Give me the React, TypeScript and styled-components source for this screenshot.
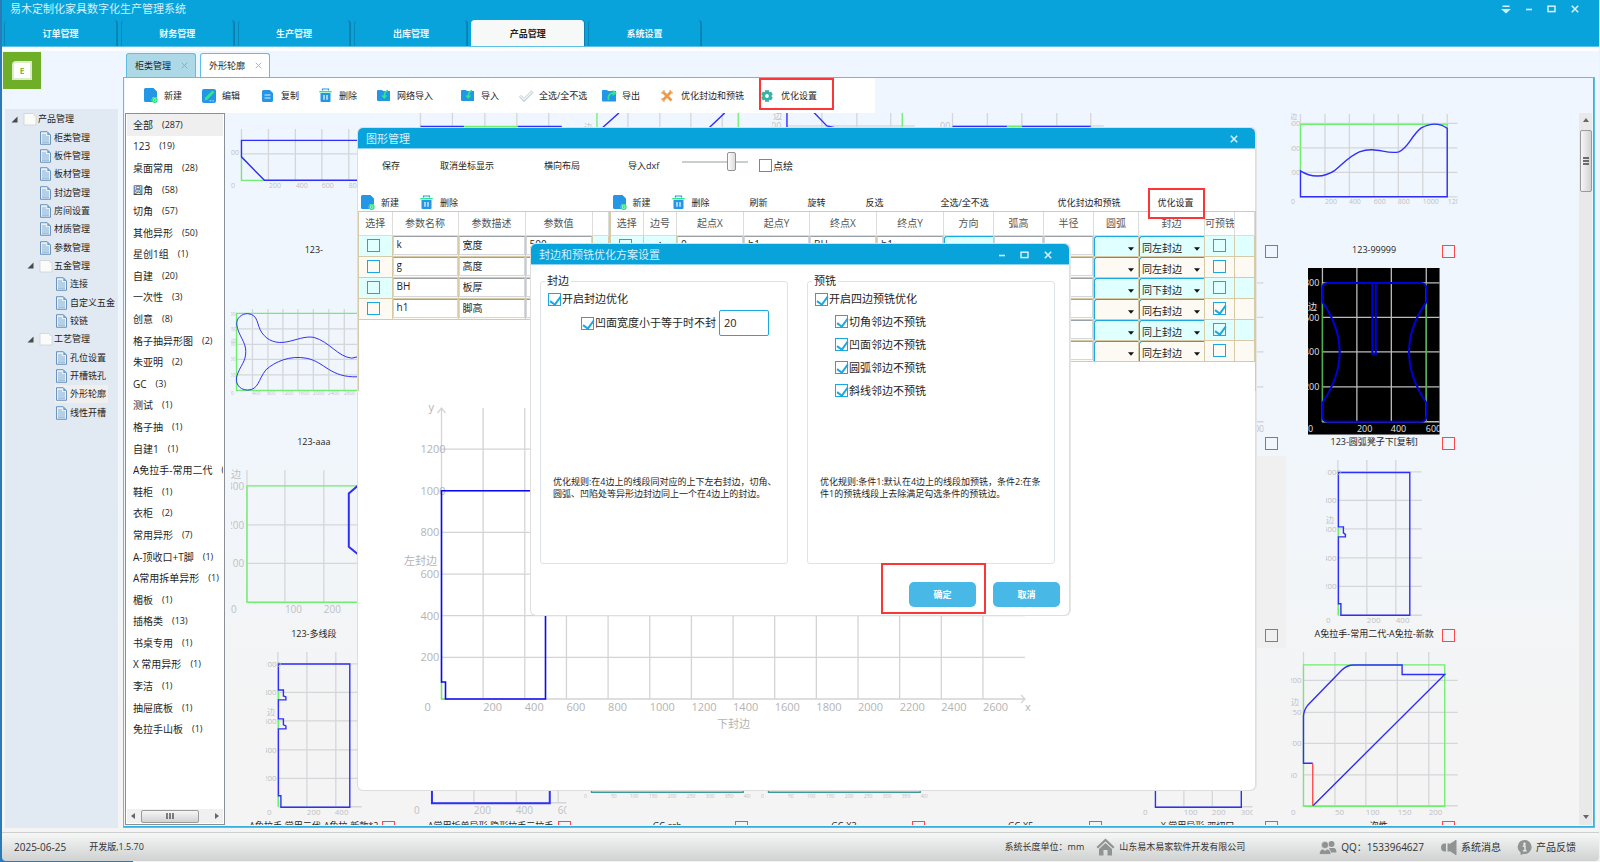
import React from "react";
import styled, { createGlobalStyle, css } from "styled-components";

const C = {
  blue: "#09a3dc",
  line: "#5cbfe6",
  accent: "#1ba8e0",
  text: "#1e1e1e",
  mark: "#fb3636",
  tan: "#d6cba6",
};

const GlobalStyle = createGlobalStyle`
  * { box-sizing: border-box; }
  html, body { margin: 0; padding: 0; }
  body {
    font-family: "Open Sans", "Noto Sans CJK SC", sans-serif;
    font-size: 9px;
    line-height: 12px;
    color: ${C.text};
  }
  button, input, select { font: inherit; color: inherit; }
  button { border: 0; background: none; padding: 0; cursor: pointer; white-space: nowrap; }
`;

/* ---------- shell ---------- */

const Shell = styled.div`
  position: relative;
  display: flex;
  flex-direction: column;
  height: 100vh;
  padding: 0 1px 1px 2px;
  overflow: hidden;
  background: linear-gradient(to right, #2a7ab5 133px, #f2f2f2 133px);
`;

const Header = styled.header`
  flex: 0 0 47px;
  background: ${C.blue};
  border-bottom: 1px solid ${C.line};
`;

const TitleRow = styled.div`
  display: flex;
  align-items: center;
  justify-content: space-between;
  height: 20px;
  padding: 0 19px 2px 8px;
`;

const AppTitle = styled.h1`
  margin: 0;
  font-size: 11px;
  font-weight: 400;
  line-height: 16px;
  color: #d2f1fd;
`;

const WindowButtons = styled.div`
  display: flex;
  align-items: center;
  gap: 12px;
`;

const WindowButton = styled.button`
  display: grid;
  place-items: center;
  width: 11px;
  height: 12px;
`;

const ModuleTabs = styled.nav`
  display: flex;
  gap: 4px;
  width: 699px;
  padding-left: 2px;
  height: 26px;
`;

const ModuleTab = styled.button<{ $active?: boolean }>`
  flex: 1;
  font-weight: 700;
  border-radius: 4px 4px 0 0;
  color: ${(p) => (p.$active ? "#222" : "#e8f8ff")};
  background: ${(p) => (p.$active ? "#f7f9f9" : C.blue)};
  border: 1px solid ${(p) => (p.$active ? "#f7f9f9" : "#0b86b8")};
  border-top-color: ${(p) => (p.$active ? "#f7f9f9" : C.blue)};
  border-bottom: 0;
  box-shadow: 1px 0 0 #0b7fae;
`;

const Workspace = styled.div`
  flex: 1;
  min-height: 0;
  display: flex;
  padding: 1px 4px 4px 1px;
  border-top: 4px solid #fcfdff;
  background: linear-gradient(#eff6ff 10%, #f1f6fb 55%, #f4f4f4 85%);
`;

const Side = styled.aside`
  flex: 0 0 120px;
  display: flex;
  flex-direction: column;
`;

const ModuleBadge = styled.button`
  display: grid;
  place-items: center;
  width: 38px;
  height: 37px;
  background: #6fae27;
`;

const BadgeSheet = styled.span`
  display: grid;
  place-items: center;
  width: 20px;
  height: 19px;
  border-radius: 4px 0 0 0;
  background: #fff;
  border: 2px solid #dcebc9;
  color: #7bb53b;
  font-size: 8px;
  font-weight: 700;
`;

const TreePane = styled.div`
  flex: 1;
  margin: 20px 5px 0 2px;
  background: #e1e9f3;
`;

const Tree = styled.ul`
  display: grid;
  grid-auto-rows: 1fr;
  height: 313px;
  margin: 0;
  padding: 1px 0 0;
  list-style: none;
`;

const TreeRow = styled.li<{ $level: number }>`
  display: flex;
  align-items: center;
  padding-left: ${(p) => 6 + p.$level * 16}px;
  white-space: nowrap;
`;

const TreeToggle = styled.span`
  display: flex;
  flex: 0 0 12px;
`;

const TreeLabel = styled.a<{ $selected?: boolean }>`
  display: flex;
  align-items: center;
  gap: 1px;
  height: 18px;
  padding-right: 2px;
  color: inherit;
  text-decoration: none;
  background: ${(p) => (p.$selected ? "#f0efee" : "transparent")};
`;

const Main = styled.main`
  flex: 1;
  min-width: 0;
  display: flex;
  flex-direction: column;
`;

const PageTabs = styled.div`
  display: flex;
  gap: 4px;
  height: 25px;
  padding: 1px 0 0 3px;
`;

const PageTab = styled.button<{ $active?: boolean }>`
  position: relative;
  display: flex;
  align-items: center;
  justify-content: space-between;
  width: 70px;
  padding: 0 7px 0 8px;
  border: 1px solid ${C.line};
  border-bottom: 0;
  border-radius: 3px 3px 0 0;
  background: ${(p) => (p.$active ? "#fff" : "#add8e6")};
`;

const Panel = styled.section`
  flex: 1;
  min-height: 0;
  display: flex;
  flex-direction: column;
  border: 1px solid ${C.line};
  box-shadow: inset 0 -1px 0 #35afdf, inset -1px 0 0 #35afdf;
  padding: 0 2px 2px 1px;
`;

const Toolbar = styled.div`
  display: flex;
  align-items: center;
  width: 750px;
  height: 35px;
  padding-left: 19px;
  background: #fff;
`;

const ToolButtonBox = styled.button<{ $w: number }>`
  position: relative;
  display: flex;
  align-items: center;
  flex: 0 0 ${(p) => p.$w}px;
  height: 20px;
`;

const IconSlot = styled.span`
  display: flex;
  align-items: center;
  flex: 0 0 20px;
`;

/* red frame that points out a control */
const Mark = styled.span<{ $x: number; $y: number; $w: number; $h: number }>`
  position: absolute;
  left: ${(p) => p.$x}px;
  top: ${(p) => p.$y}px;
  width: ${(p) => p.$w}px;
  height: ${(p) => p.$h}px;
  border: 2px solid ${C.mark};
  pointer-events: none;
`;

const Split = styled.div`
  flex: 1;
  min-height: 0;
  display: flex;
`;

const CategoryPane = styled.div`
  flex: 0 0 100px;
  display: flex;
  flex-direction: column;
  justify-content: space-between;
  margin-right: 1px;
  overflow: hidden;
  border: 1px solid #8b8f96;
  background: #fff;
`;

const CategoryList = styled.ul`
  display: grid;
  grid-auto-rows: 1fr;
  height: 626px;
  margin: 0;
  padding: 0 1px;
  list-style: none;
`;

const Category = styled.li<{ $selected?: boolean }>`
  display: flex;
  align-items: center;
  gap: 9px;
  padding-left: 6px;
  font-size: 10px;
  overflow: hidden;
  white-space: nowrap;
  background: ${(p) => (p.$selected ? "#efefef" : "transparent")};
`;

const CategoryName = styled.span`
  flex: none;
`;

const CategoryCount = styled.span`
  font-size: 9px;
`;

const HScroll = styled.div`
  display: flex;
  align-items: center;
  justify-content: space-between;
  height: 14px;
  margin: 0 1px 1px;
  padding: 0 4px;
  background: #f0f0f0;
`;

const HThumb = styled.div`
  display: grid;
  place-items: center;
  width: 58px;
  height: 13px;
  margin-right: 10px;
  border: 1px solid #9a9a9a;
  border-radius: 2px;
  background: linear-gradient(#f6f6f6, #d2d2d2);
`;

const Gallery = styled.div`
  flex: 1;
  min-width: 0;
  overflow: hidden;
  padding-right: 116px;
`;

/* the sheet is scrolled down by part of a row */
const GalleryGrid = styled.div`
  display: grid;
  grid-template-columns: repeat(auto-fill, minmax(172px, 1fr));
  grid-auto-rows: 192px;
  margin-top: -41px;
`;

const Card = styled.figure<{ $hover?: boolean }>`
  display: flex;
  flex-direction: column;
  margin: 0;
  background: ${(p) => (p.$hover ? "#f0f0f0" : "transparent")};
`;

const Drawing = styled.svg`
  display: block;
  width: 100%;
  height: 171px;
`;

const Caption = styled.figcaption`
  display: flex;
  align-items: center;
  height: 16px;
  padding: 0 8px 0 20px;
`;

const CaptionText = styled.label`
  flex: 1;
  min-width: 0;
  padding-bottom: 2px;
  text-align: center;
  white-space: nowrap;
`;

const VScroll = styled.div`
  flex: 0 0 13px;
  display: flex;
  flex-direction: column;
  align-items: center;
  padding: 5px 0 6px;
  background: #e9e9ea;
`;

const VThumb = styled.div`
  display: grid;
  place-items: center;
  width: 12px;
  height: 62px;
  margin: 8px 0 auto;
  border: 1px solid #9a9a9a;
  border-radius: 2px;
  background: linear-gradient(to right, #f6f6f6, #d2d2d2);
`;

const Footer = styled.footer`
  flex: 0 0 29px;
  display: flex;
  align-items: center;
  padding: 0 23px 0 12px;
  border-top: 1px solid #cdcfcf;
  border-radius: 0 0 4px 4px;
  color: #333;
  background: linear-gradient(#f6f7f7, #cfd2d1);
`;

const FooterItem = styled.span<{ $push?: boolean; $gap: number; $big?: boolean }>`
  display: flex;
  align-items: center;
  gap: 4px;
  margin-left: ${(p) => (p.$push ? "auto" : p.$gap + "px")};
  font-size: ${(p) => (p.$big ? 10 : 9)}px;
  white-space: nowrap;
`;

/* ---------- form parts ---------- */

const Check = styled.input.attrs({ type: "checkbox" })<{ $red?: boolean }>`
  appearance: none;
  position: relative;
  flex: none;
  width: 13px;
  height: 13px;
  margin: 0;
  border: 1px solid ${(p) => (p.$red ? "#ff4747" : C.accent)};
  background: ${(p) => (p.$red ? "transparent" : "#fff")};
  &:checked::after {
    content: "";
    position: absolute;
    left: 3px;
    top: 0;
    width: 5px;
    height: 9px;
    border: solid ${C.accent};
    border-width: 0 2px 2px 0;
    transform: rotate(36deg);
  }
`;

const CheckLabel = styled.label<{ $size?: number }>`
  display: flex;
  align-items: center;
  gap: 1px;
  font-size: ${(p) => p.$size || 11}px;
  white-space: nowrap;
`;

/* ---------- windows ---------- */

const windowFrame = css`
  position: absolute;
  display: flex;
  flex-direction: column;
  border-radius: 5px;
  background: #fff;
  box-shadow: 0 0 0 1px #dedede, 1px 0 0 1px #e6e6e6;
`;

const ShapeWindow = styled.section`
  ${windowFrame}
  left: 358px;
  top: 128px;
  width: 897px;
  height: 662px;
`;

const OptionsWindow = styled.section`
  ${windowFrame}
  left: 531px;
  top: 244px;
  width: 538px;
  height: 371px;
`;

const WindowTitle = styled.header`
  display: flex;
  align-items: center;
  justify-content: space-between;
  flex: 0 0 21px;
  padding: 1px 16px 0 8px;
  border-radius: 5px 5px 0 0;
  border-bottom: 1px solid #8fd3ee;
  background: ${C.blue};
  color: #d2f1fd;
  font-size: 11px;
`;

const WindowBar = styled.div`
  display: flex;
  align-items: center;
  height: 33px;
  padding-left: 4px;
`;

const ZoomSlider = styled.input.attrs({ type: "range" })`
  appearance: none;
  width: 66px;
  height: 20px;
  margin: 0 11px 8px -10px;
  background: transparent;
  &::-webkit-slider-runnable-track {
    height: 2px;
    background: #c9cfcf;
  }
  &::-webkit-slider-thumb {
    appearance: none;
    width: 9px;
    height: 19px;
    margin-top: -9px;
    border: 1px solid #929292;
    border-radius: 2px;
    background: linear-gradient(to right, #fdfdfd, #dcdcdc);
  }
`;

const Panes = styled.div`
  display: flex;
  margin-top: 8px;
`;

const PaneColumn = styled.div<{ $w: number }>`
  flex: 0 0 ${(p) => p.$w}px;
`;

const PaneBar = styled.div`
  display: flex;
  align-items: center;
  height: 21px;
  padding: 4px 0 0 3px;
`;

const PaneBox = styled.div`
  height: 180px;
  border: 1px solid ${C.tan};
  border-bottom: 0;
`;

const Grid = styled.table`
  table-layout: fixed;
  border-collapse: collapse;
  width: 100%;
  font-size: 10px;
`;

const HeadCell = styled.th`
  height: 23px;
  padding: 0;
  border: 1px solid #dcdcdc;
  border-top: 0;
  border-left: 0;
  font-weight: 400;
  color: #555;
  overflow: hidden;
  white-space: nowrap;
`;

const GridRow = styled.tr<{ $odd?: boolean }>`
  background: ${(p) => (p.$odd ? "#fcfaf3" : "#e0ffff")};
`;

const Cell = styled.td<{ $center?: boolean }>`
  height: 21px;
  padding: 0;
  border: 1px solid ${C.tan};
  border-left: 0;
  text-align: ${(p) => (p.$center ? "center" : "left")};
  line-height: 12px;
  vertical-align: middle;
  & > input[type="checkbox"] { display: block; margin: 0 auto 0 8px; background: transparent; }
`;

const CellInput = styled.input`
  display: block;
  width: 100%;
  height: 19px;
  padding: 0 3px 3px;
  border: 1px solid #d4d8dc;
  border-top-color: #9aa0a6;
  background: #fff;
  outline: 0;
`;

const CellSelect = styled.div`
  position: relative;
  height: 20px;
  border-left: 1px solid ${C.accent};
  border-top: 1px solid ${C.accent};
  border-radius: 3px 0 0 0;
  & > svg { position: absolute; right: 4px; top: 10px; }
  & > select {
    appearance: none;
    display: block;
    width: 100%;
    height: 19px;
    padding: 4px 0 0 2px;
    border: 0;
    background: transparent;
    line-height: 12px;
  }
`;

const ChartArea = styled.svg`
  display: block;
  flex: none;
  width: 100%;
  height: 350px;
  margin-top: 6px;
`;

const OptionsBody = styled.div`
  display: flex;
  gap: 19px;
  padding: 9px 14px 0 9px;
`;

const Group = styled.fieldset`
  flex: 1;
  min-width: 0;
  height: 290px;
  margin: 0;
  padding: 0;
  border: 1px solid #dbe4ea;
  border-radius: 3px;
`;

const GroupTitle = styled.legend`
  margin-left: 4px;
  padding: 0 2px;
  font-size: 11px;
  line-height: 14px;
`;

const GroupBody = styled.div`
  display: flex;
  flex-direction: column;
  height: 275px;
  padding: 0 0 63px 7px;
`;

const OptionRow = styled.div<{ $indent?: number; $h?: number }>`
  display: flex;
  align-items: center;
  gap: 3px;
  height: ${(p) => p.$h || 22}px;
  padding-left: ${(p) => p.$indent || 0}px;
`;

const WidthInput = styled.input`
  width: 50px;
  height: 26px;
  padding: 0 4px 2px;
  border: 1px solid ${C.accent};
  border-radius: 2px;
  font-size: 11px;
`;

const Rule = styled.p`
  margin: auto 0 0 5px;
  white-space: nowrap;
`;

const Actions = styled.div`
  display: flex;
  justify-content: flex-end;
  gap: 17px;
  margin-top: 18px;
  padding-right: 9px;
`;

const ActionButton = styled.button`
  position: relative;
  width: 67px;
  height: 25px;
  border-radius: 5px;
  background: #48b9e6;
  color: #fff;
  font-weight: 700;
`;

/* ---------- icons ---------- */

const MinIcon = () => (
  <svg width="8" height="8" viewBox="0 0 8 8"><path d="M1 4.5h6" stroke="#d2f1fd" strokeWidth="1.6" /></svg>
);
const MaxIcon = () => (
  <svg width="9" height="8" viewBox="0 0 9 8"><rect x="1" y="1.2" width="7" height="5.4" fill="none" stroke="#d2f1fd" strokeWidth="1.5" /></svg>
);
const CloseIcon = ({ color = "#d2f1fd", size = 8 }: { color?: string; size?: number }) => (
  <svg width={size} height={size} viewBox="0 0 8 8"><path d="M.8.8l6.4 6.4M7.2.8L.8 7.2" stroke={color} strokeWidth={color === "#d2f1fd" ? 1.6 : 1} /></svg>
);
const MenuIcon = () => (
  <svg width="10" height="10" viewBox="0 0 10 10" fill="#d2f1fd"><path d="M1.500 1.500h7v1.400h-7zM0 5h10L5 9.600z" /></svg>
);

const icons: Record<string, React.ReactNode> = {
  add: (
    <svg width="14" height="15" viewBox="0 0 14 15">
      <path d="M1.500 0h8L13 3.500V14H1.500A1.500 1.500 0 0 1 0 12.500V1.500A1.500 1.500 0 0 1 1.500 0z" fill="#2496e6" />
      <circle cx="10.700" cy="12" r="3" fill="#e9fff2" /><circle cx="10.700" cy="12" r="2.300" fill="none" stroke="#21e07c" strokeWidth="1.200" />
      <path d="M10.700 10.700v2.600M9.400 12h2.600" stroke="#21e07c" />
    </svg>
  ),
  edit: (
    <svg width="14" height="14" viewBox="0 0 14 14">
      <rect width="14" height="14" rx="2" fill="#2496e6" />
      <path d="M2.500 11.500l.8-3L10.500 1.500l2 1.700-7.200 7.500z" fill="#2be98b" /><path d="M7.500 11.800h2M10.500 11.800h1.500" stroke="#cfe8fb" strokeWidth=".8" />
    </svg>
  ),
  copy: (
    <svg width="13" height="14" viewBox="0 0 13 14">
      <path d="M2.500 1h6.300L12 4v7.500A1.500 1.500 0 0 1 10.500 13h-8A1.500 1.500 0 0 1 1 11.500v-9A1.500 1.500 0 0 1 2.500 1z" fill="#2496e6" />
      <path d="M3.500 6h6M3.500 9h6" stroke="#d9eefc" strokeWidth="1.200" />
    </svg>
  ),
  trash: (
    <svg width="13" height="15" viewBox="0 0 13 15">
      <path d="M3.500 2.500V1h6v1.500" fill="none" stroke="#2496e6" strokeWidth="1.200" /><path d="M.3 3.700h12.400" stroke="#2be98b" strokeWidth="1.400" />
      <path d="M1.500 5h10v8a1 1 0 0 1-1 1h-8a1 1 0 0 1-1-1z" fill="#2496e6" /><path d="M5 7v4.800M8 7v4.800" stroke="#e4f3fd" strokeWidth="1.300" />
    </svg>
  ),
  load: (
    <svg width="14" height="13" viewBox="0 0 14 13">
      <path d="M1 1h4l1 1h7v10H1a1 1 0 0 1-1-1V2a1 1 0 0 1 1-1z" fill="#2496e6" />
      <path d="M11 1.500C8.500 2 7.500 4 7.300 7.200" fill="none" stroke="#2be98b" strokeWidth="1.700" /><path d="M4.300 6.500h6L7.300 10z" fill="#2be98b" />
    </svg>
  ),
  check: (
    <svg width="15" height="12" viewBox="0 0 15 12">
      <path d="M1 6l4 3.800L13.500 1.500" fill="none" stroke="#bccbd2" strokeWidth="3" /><path d="M1.300 6.200L5 9.500l8.200-7.800" fill="none" stroke="#eef6f8" strokeWidth="1.500" />
    </svg>
  ),
  export: (
    <svg width="16" height="13" viewBox="0 0 16 13">
      <path d="M1 1h4l1 1h8v10.500H1a1 1 0 0 1-1-1V2a1 1 0 0 1 1-1z" fill="#2496e6" />
      <path d="M6.500 11C5.500 7 7.500 4.500 11 4" fill="none" stroke="#2be98b" strokeWidth="1.700" /><path d="M10.500 .8L15 4 10.500 7z" fill="#2be98b" />
    </svg>
  ),
  tools: (
    <svg width="12" height="12" viewBox="0 0 12 12">
      <path d="M2 2l8.500 8.500M10 2L2 10" stroke="#eb9a4c" strokeWidth="2.800" /><path d="M.5 3.500L3.500 .5M8.500 .5l3 3M.5 8.500l3 3" stroke="#f2a763" strokeWidth="1.600" />
    </svg>
  ),
  gear: (
    <svg width="12" height="12" viewBox="0 0 12 12">
      <circle cx="6" cy="6" r="3.300" fill="none" stroke="#36b4a2" strokeWidth="2.800" />
      <path d="M4 .3h4v2H4zM4 9.700h4v2H4zM.2 4.500l1.700-3 1.700 1-1.700 3zM8.400 9.500l1.700-3 1.700 1-1.700 3zM11.800 4.500l-1.700-3-1.700 1 1.700 3zM3.600 9.500l-1.700-3-1.700 1 1.700 3z" fill="#36b4a2" />
    </svg>
  ),
};

const FolderIcon = () => (
  <svg width="14" height="14" viewBox="0 0 14 14"><path d="M1 1.500h9.500L13 4v9H1z" fill="#fbfbfa" stroke="#cfd2d5" strokeWidth=".8" /><path d="M10.500 1.500V4H13" fill="#e2e2e2" /></svg>
);
const DocIcon = () => (
  <svg width="14" height="14" viewBox="0 0 14 14">
    <path d="M1.500.7h6.800L11.500 4v9.300h-10z" fill="#e4f0fa" stroke="#5d8ab5" strokeWidth=".9" /><path d="M8.300.7V4h3.200z" fill="#6d9cc8" />
    <path d="M3 4h4M3 6h7M3 8h7M3 10h7M3 11.800h7" stroke="#7ea7cf" strokeWidth=".9" />
  </svg>
);
const ToggleIcon = () => <svg width="7" height="7" viewBox="0 0 7 7"><path d="M6.500.5v6h-6z" fill="#4a4a4a" /></svg>;

function ToolButton({ icon, label, w, children }: { icon?: string; label: string; w: number; children?: React.ReactNode }) {
  return (
    <ToolButtonBox $w={w}>
      <IconSlot>{icon ? icons[icon] : null}</IconSlot>
      {label}
      {children}
    </ToolButtonBox>
  );
}

/* ---------- data ---------- */

const moduleTabs = ["订单管理", "财务管理", "生产管理", "出库管理", "产品管理", "系统设置"];

const tree: [number, string, boolean?][] = [
  [0, "产品管理", true], [1, "柜类管理"], [1, "板件管理"], [1, "板材管理"], [1, "封边管理"], [1, "房间设置"],
  [1, "材质管理"], [1, "参数管理"], [1, "五金管理", true], [2, "连接"], [2, "自定义五金"], [2, "铰链"],
  [1, "工艺管理", true], [2, "孔位设置"], [2, "开槽铣孔"], [2, "外形轮廓"], [2, "线性开槽"],
];

const categories: [string, number][] = [
  ["全部", 287], ["123", 19], ["桌面常用", 28], ["圆角", 58], ["切角", 57], ["其他异形", 50], ["星创1组", 1],
  ["自建", 20], ["一次性", 3], ["创意", 8], ["格子抽异形图", 2], ["朱亚明", 2], ["GC", 3], ["测试", 1],
  ["格子抽", 1], ["自建1", 1], ["A免拉手-常用二代", 1], ["鞋柜", 1], ["衣柜", 2], ["常用异形", 7],
  ["A-顶收口+T脚", 1], ["A常用拆单异形", 1], ["楣板", 1], ["插格类", 13], ["书桌专用", 1], ["X 常用异形", 1],
  ["李洁", 1], ["抽屉底板", 1], ["免拉手山板", 1],
];

type Label = [number, number, string];
interface Shape {
  name?: string;
  box?: [number, number, number, number]; // visible part: left, top, right, bottom
  xs?: number[];
  ys?: number[];
  span?: [number, number, number, number]; // grid lines: left, top, right, bottom
  green?: string;
  blue?: string;
  red?: string;
  teal?: string;
  width?: number;
  size?: number;
  labels?: Label[];
  dark?: boolean;
}

const ticks = (dx: number): Label[] =>
  [0, 50, 100, 150, 200, 250, 300, 350, 400].map((v, i) => [i ? 611 + dx + (i - 1) * 19 : 584 + dx, 798, String(v)]);

/* outlines are given in the coordinates of the whole sheet, whose first card starts at 226, 72 */
const shapes: Record<string, Shape> = {
  "0-0": {
    name: "123-", box: [231, 113, 403, 240], xs: [241.5, 268.5, 295.5, 322, 349], ys: [154], span: [241, 129, 403, 180],
    green: "M241.5 157V180.500H264", blue: "M403 140.500H241.500V157L264.500 180.500H403", size: 7,
    labels: [[227, 155, "500"], [231, 188, "0"], [269, 188, "200"], [296, 188, "400"], [322, 188, "600"], [349, 188, "800"]],
  },
  "0-1": { xs: [420.5, 452.5, 485, 517, 549], span: [420, 100, 579, 127], green: "M464 126.500H518", blue: "M420.500 126.500H464M518 126.500H562" },
  "0-2": { box: [584, 100, 756, 200], xs: [628, 660, 691, 722.5], span: [597, 100, 756, 129], green: "M597 100V129M738.500 100V129", blue: "M601 129L619 113M708 129L725 113", labels: [[584, 130, "边"]], size: 8 },
  "0-3": { box: [772, 100, 933, 200], xs: [822, 857, 891], ys: [126], span: [787, 100, 915, 129], green: "M902.500 100V129", blue: "M787 100V129M813.500 112L827 126L836 128", labels: [[773, 119, "边"], [766, 129, "600"]], size: 9 },
  "0-4": { box: [939, 100, 1109, 200], xs: [951.5, 986.5, 1021, 1056, 1090], ys: [126], span: [951, 100, 1103, 127], green: "M1006 126.500H1021", blue: "M951.500 126.500H1006M1021 126.500H1090", labels: [[934, 129, "400"]], size: 9 },
  "0-6": {
    name: "123-99999", box: [1291, 113, 1458, 240], xs: [1300.5, 1325, 1349.5, 1374, 1398.5, 1423, 1447.5], ys: [123.5, 148, 172.500, 197], span: [1300, 114, 1458, 197],
    green: "M1300.500 171V124.500H1447.500V128", size: 7,
    blue: "M1300.500 171C1311 178 1324 178 1335 170.500C1345 162 1350 156 1359.500 152C1376 146 1386 155 1399 152C1409 148 1411 136 1421.500 128C1431 123 1440 123 1447.500 128.500V197H1300.500Z",
    labels: [[1290, 119, "边"], [1288, 126, "600"], [1288, 151, "400"], [1288, 175, "200"], [1291, 204, "0"], [1325, 204, "200"], [1349, 204, "400"], [1374, 204, "600"], [1398, 204, "800"], [1423, 204, "1000"], [1448, 204, "1200"]],
  },
  "1-0": {
    name: "123-aaa", box: [231, 300, 403, 430], xs: [252.5, 268, 283, 298, 313.5, 329, 344.5, 360], ys: [329, 344.500, 359.500, 375], span: [237, 309, 403, 390], size: 5,
    green: "M403 313.500H236.500V390.500H403", width: 1,
    blue: "M403 377H358C330 378 325 362 307 358.500C290 355 275 362 266 370C258 380 259 390 247.500 390.300C238 390 235 382 237 376C240 366 246 362 245.800 351.700C246 342 238 335 236.800 325C236 318 242 313.700 247.800 313.700C259 315 256 324 262 333C268 341 276 344 287 342C297 340 305 336 314 337.500C330 342 338 357 352 358.300L362 356",
    labels: [[227, 316, "500"], [231, 331, "50"], [231, 342, "边"], [227, 346, "200"], [227, 361, "100"], [227, 377, "100"], [231, 395, "0"], [252, 395, "400"], [267, 395, "800"], [282, 395, "1200"], [298, 395, "1600"], [313, 395, "2000"], [328, 395, "2400"], [344, 395, "2800"]],
  },
  "1-5": { ys: [283, 317.5, 352, 387, 422], span: [1240, 283, 1263, 422], box: [1200, 270, 1263, 434], labels: [[1248, 432, "1000"]], size: 9 },
  "1-6": {
    name: "123-圆弧凳子下[复制]", dark: true, box: [1308, 268, 1440, 435], xs: [1322.5, 1357, 1391.500, 1426.500], ys: [283, 317.500, 352, 387, 422], span: [1322, 268, 1440, 422],
    green: "M1322.500 283V422M1426.500 283V422", width: 2, size: 9,
    blue: "M1328 283H1421Q1426.500 283 1426.500 289V302Q1392 352 1426.500 403V416Q1426.500 422 1421 422H1328Q1322.500 422 1322.500 416V403Q1357 352 1322.500 302V289Q1322.500 283 1328 283M1372.500 283V354H1376V283",
    labels: [[1304, 286, "800"], [1308, 310, "边"], [1304, 321, "600"], [1304, 355, "400"], [1304, 390, "200"], [1308, 432, "0"], [1357, 432, "200"], [1391, 432, "400"], [1426, 432, "600"]],
  },
  "2-0": {
    name: "123-多线段", box: [231, 465, 403, 620], xs: [247, 285, 324], ys: [525, 563.500], span: [247, 470, 403, 602],
    green: "M403 486H247V602.500H403", width: 2, blue: "M360 484L349 493.500V547L360 556", size: 10,
    labels: [[231, 478, "边"], [227, 490, "300"], [227, 529, "200"], [227, 567, "100"], [231, 613, "0"], [285, 613, "100"], [324, 613, "200"]],
  },
  "2-6": {
    name: "A免拉手-常用二代-A免拉-新款", box: [1326, 456, 1450, 640], xs: [1338, 1367, 1396], ys: [472, 500.500, 529, 558, 586.500, 615.500], span: [1338, 460, 1422, 616],
    green: "M1338.500 527V537M1338.500 604V615.500", size: 8,
    blue: "M1338.500 472.500H1410V615.500H1341V604H1338.500V537H1345.500V534.500L1343.500 533V527H1338.500Z",
    labels: [[1323, 475, "1000"], [1323, 503, "800"], [1326, 523, "边"], [1323, 532, "600"], [1323, 561, "400"], [1323, 589, "200"], [1326, 623, "0"], [1367, 623, "200"], [1396, 623, "400"]],
  },
  "3-0": {
    name: "A免拉手-常用二代-A免拉-新款*2", box: [266, 648, 403, 830], xs: [278, 307, 336], ys: [664, 692.500, 721, 750, 778.500, 807], span: [278, 652, 362, 807],
    green: "M278.500 690V700M278.500 719V729M278.500 796V807", size: 8,
    blue: "M278.500 664H350V807.500H281V796H278.500V729H286V726L283.500 725V719H278.500V700H286V697L283.500 696V690H278.500Z",
    labels: [[263, 667, "1000"], [263, 695, "800"], [267, 715, "边"], [263, 724, "600"], [263, 753, "400"], [263, 781, "200"], [267, 815, "0"], [307, 815, "200"], [335, 815, "400"]],
  },
  "3-1": { name: "A常用拆单异形-隐形拉手三拉手", box: [403, 700, 567, 830], xs: [474, 516.5, 558.5], ys: [803], span: [432, 700, 567, 803], blue: "M432 700V803.500H550V700", width: 2, size: 10, labels: [[414, 814, "0"], [474, 814, "200"], [516, 814, "400"], [558, 814, "600"]] },
  "3-2": { name: "GC-ssb", box: [579, 700, 751, 830], teal: "M591.500 700V792.500H743.500V700", size: 5, labels: ticks(0) },
  "3-3": { name: "GC-X3", box: [756, 700, 928, 830], teal: "M768.500 700V792.500H920.500V700", size: 5, labels: ticks(177) },
  "3-4": { name: "GC-X5" },
  "3-5": { name: "X 常用异形-双切口", box: [1109, 700, 1252, 830], xs: [1183, 1211.5], ys: [807], span: [1154, 700, 1252, 807], blue: "M1154.500 700V807.500H1240.500V700", size: 8, labels: [[1142, 815, "0"], [1183, 815, "100"], [1211, 815, "200"], [1240, 815, "300"]] },
  "3-6": {
    name: "一次性", box: [1291, 648, 1460, 830], xs: [1303.5, 1335, 1366, 1397.500, 1429], ys: [680.500, 712.500, 743.500, 775, 806], span: [1303, 652, 1458, 806],
    green: "M1303.500 665H1445V806.500H1303.500Z", red: "M1312.800 763.500V806", size: 8,
    blue: "M1312.800 763.500H1303.500V716Q1304 710 1308 705L1342 670Q1347 665 1354 665H1402.300V674.500H1445L1313 806",
    labels: [[1288, 683, "200"], [1291, 705, "边"], [1288, 715, "150"], [1288, 746, "100"], [1288, 778, "50"], [1291, 815, "0"], [1335, 815, "50"], [1366, 815, "100"], [1398, 815, "150"], [1429, 815, "200"]],
  },
};

function ShapeCard({ row, col }: { row: number; col: number }) {
  const id = `${row}-${col}`;
  const s: Shape = shapes[id] || {};
  const x = Math.round(226 + col * 176.6);
  const y = 72 + row * 192;
  const [bl, bt, br, bb] = s.box || [x, y, x + 177, y + 171];
  const [gl, gt, gr, gb] = s.span || [0, 0, 0, 0];
  const w = s.width || 1.4;
  return (
    <Card $hover={row === 2 && col === 5}>
      <Drawing viewBox={`${x} ${y} 177 171`} preserveAspectRatio="xMidYMin meet" fill="none" aria-hidden>
        <clipPath id={"clip-" + id}><rect x={bl} y={bt} width={br - bl} height={bb - bt} /></clipPath>
        <g clipPath={`url(#clip-${id})`}>
          {s.dark && <rect x={bl} y={bt} width={br - bl} height={bb - bt} fill="#000" />}
          <g stroke={s.dark ? "#bdbdbd" : "#d4d6d9"} strokeWidth="1.3">
            {(s.xs || []).map((v) => <path key={v} d={`M${v} ${gt}V${gb}`} />)}
            {(s.ys || []).map((v) => <path key={v} d={`M${gl} ${v}H${gr}`} />)}
          </g>
          {s.green && <path d={s.green} stroke={s.dark ? "#4fae4f" : "#6fee6f"} strokeWidth="1.3" />}
          {s.teal && <path d={s.teal} stroke="#3f9a96" strokeWidth="1.3" />}
          {s.blue && <path d={s.blue} stroke={s.dark ? "#0000d8" : "#2f2ffb"} strokeWidth={w} />}
          {s.red && <path d={s.red} stroke="#ff4040" strokeWidth="1.3" />}
          <g fill={s.dark ? "#e4e4e4" : "#bfc1c4"} fontSize={s.size || 8}>
            {(s.labels || []).map(([lx, ly, t], i) => <text key={i} x={lx} y={ly}>{t}</text>)}
          </g>
        </g>
      </Drawing>
      <Caption>
        <CaptionText htmlFor={"shape-" + id}>{s.name}</CaptionText>
        <Check $red id={"shape-" + id} />
      </Caption>
    </Card>
  );
}

/* ---------- shape window ---------- */

const params: [string, string, string][] = [["k", "宽度", "500"], ["g", "高度", "1000"], ["BH", "板厚", "18"], ["h1", "脚高", "80"]];

const paramCols: [string, number][] = [["选择", 33], ["参数名称", 66], ["参数描述", 67], ["参数值", 67], ["", 16]];
const edgeCols: [string, number][] = [
  ["选择", 33], ["边号", 33], ["起点X", 67], ["起点Y", 66], ["终点X", 67], ["终点Y", 67], ["方向", 50],
  ["弧高", 50], ["半径", 50], ["圆弧", 45], ["封边", 66], ["可预铣", 30], ["", 20],
];
const edges: [string, string, string, string, string, boolean][] = [
  ["0", "h1", "BH", "h1", "同左封边", false],
  ["BH", "h1", "BH", "0", "同左封边", false],
  ["BH", "0", "k", "0", "同下封边", false],
  ["k", "0", "k", "g", "同右封边", true],
  ["k", "g", "0", "g", "同上封边", true],
  ["0", "g", "0", "h1", "同左封边", false],
];
const edgeBands = ["同左封边", "同右封边", "同上封边", "同下封边"];

const Caret = () => <svg width="6" height="4" viewBox="0 0 6 4"><path d="M0 .3h6L3 3.700z" fill="#111" /></svg>;

function TableHead({ cols }: { cols: [string, number][] }) {
  return (
    <>
      <colgroup>{cols.map(([, w], i) => <col key={i} width={w} />)}</colgroup>
      <thead><tr>{cols.map(([t], i) => <HeadCell key={i}>{t}</HeadCell>)}</tr></thead>
    </>
  );
}

function ShapeChart() {
  const ox = 83.5;
  const oy = 302;
  const u = 41.65;
  const right = 667;
  const xs = Array.from({ length: 13 }, (_, i) => i + 1);
  const ys = [1, 2, 3, 4, 5, 6];
  return (
    <ChartArea fill="none" aria-label="图形预览">
      <g stroke="#d4d4d4" strokeWidth="1.3">
        <path d={`M${ox} ${oy}V11M${ox - 4} 16L${ox} 11L${ox + 4} 16`} />
        <path d={`M${ox} ${oy}H${right}M${right - 4} ${oy - 4}L${right} ${oy}L${right - 4} ${oy + 4}`} />
        {xs.map((i) => <path key={i} d={`M${ox + i * u} 11V${oy}`} />)}
        {ys.map((i) => <path key={i} d={`M${ox} ${oy - i * u}H${right}`} />)}
      </g>
      <g fill="#b4b4b4" fontSize="11">
        {xs.map((i) => <text key={i} x={ox + i * u} y={oy + 12}>{i * 200}</text>)}
        {ys.map((i) => <text key={i} x={ox - 21} y={oy - i * u + 4}>{i * 200}</text>)}
        <text x={ox - 17} y={oy + 12}>0</text>
        <text x={ox - 13} y="14">y</text>
        <text x={right} y={oy + 12}>x</text>
        <text x="46" y="168">左封边</text>
        <text x="359" y={oy + 29}>下封边</text>
      </g>
      <path d={`M${ox} ${oy - 17}V${oy}H${ox + 4}`} stroke="#6fe86f" strokeWidth="1.500" />
      <path d={`M${ox} ${oy - 17}V${oy - 5 * u}H${ox + 104}V${oy}H${ox + 4}V${oy - 17}Z`} stroke="#0a0af2" strokeWidth="1.600" />
    </ChartArea>
  );
}

function ShapeDialog() {
  return (
    <ShapeWindow>
      <WindowTitle>图形管理<WindowButton aria-label="关闭"><CloseIcon /></WindowButton></WindowTitle>
      <WindowBar>
        <ToolButton label="保存" w={58} />
        <ToolButton label="取消坐标显示" w={104} />
        <ToolButton label="横向布局" w={84} />
        <ToolButton label="导入dxf" w={84} />
        <ZoomSlider defaultValue={79} aria-label="缩放" />
        <CheckLabel $size={10}><Check />点绘</CheckLabel>
      </WindowBar>
      <Panes>
        <PaneColumn $w={251}>
          <PaneBar>
            <ToolButton icon="add" label="新建" w={59} />
            <ToolButton icon="trash" label="删除" w={59} />
          </PaneBar>
          <PaneBox>
            <Grid>
              <TableHead cols={paramCols} />
              <tbody>
                {params.map(([k, d, v], r) => (
                  <GridRow key={k} $odd={r % 2 === 1}>
                    <Cell><Check aria-label={"选择 " + k} /></Cell>
                    {[k, d, v].map((t, i) => (
                      <Cell key={i}><CellInput defaultValue={t} aria-label={paramCols[i + 1][0]} /></Cell>
                    ))}
                    <Cell />
                  </GridRow>
                ))}
              </tbody>
            </Grid>
          </PaneBox>
        </PaneColumn>
        <PaneColumn $w={646}>
          <PaneBar>
            <ToolButton icon="add" label="新建" w={59} />
            <ToolButton icon="trash" label="删除" w={58} />
            <ToolButton label="刷新" w={58} />
            <ToolButton label="旋转" w={58} />
            <ToolButton label="反选" w={75} />
            <ToolButton label="全选/全不选" w={117} />
            <ToolButton label="优化封边和预铣" w={100} />
            <ToolButton label="优化设置" w={60}><Mark $x={10} $y={-5} $w={57} $h={31} /></ToolButton>
          </PaneBar>
          <PaneBox>
            <Grid>
              <TableHead cols={edgeCols} />
              <tbody>
                {edges.map(([x1, y1, x2, y2, band, mill], r) => (
                  <GridRow key={r} $odd={r % 2 === 1}>
                    <Cell><Check aria-label={`选择 ${r + 1}`} /></Cell>
                    <Cell $center>{r + 1}</Cell>
                    {[x1, y1, x2, y2].map((t, i) => (
                      <Cell key={i}><CellInput defaultValue={t} aria-label={edgeCols[i + 2][0]} /></Cell>
                    ))}
                    <Cell><CellSelect><select aria-label="方向"><option /></select></CellSelect></Cell>
                    <Cell><CellInput aria-label="弧高" /></Cell>
                    <Cell><CellInput aria-label="半径" /></Cell>
                    <Cell><CellSelect><select aria-label="圆弧"><option /></select><Caret /></CellSelect></Cell>
                    <Cell>
                      <CellSelect>
                        <select aria-label="封边" defaultValue={band}>{edgeBands.map((b) => <option key={b}>{b}</option>)}</select>
                        <Caret />
                      </CellSelect>
                    </Cell>
                    <Cell><Check aria-label="可预铣" defaultChecked={mill} /></Cell>
                    <Cell />
                  </GridRow>
                ))}
              </tbody>
            </Grid>
          </PaneBox>
        </PaneColumn>
      </Panes>
      <ShapeChart />
    </ShapeWindow>
  );
}

function OptionsDialog() {
  return (
    <OptionsWindow>
      <WindowTitle>
        封边和预铣优化方案设置
        <WindowButtons>
          <WindowButton aria-label="最小化"><MinIcon /></WindowButton>
          <WindowButton aria-label="最大化"><MaxIcon /></WindowButton>
          <WindowButton aria-label="关闭"><CloseIcon /></WindowButton>
        </WindowButtons>
      </WindowTitle>
      <OptionsBody>
        <Group>
          <GroupTitle>封边</GroupTitle>
          <GroupBody>
            <OptionRow><CheckLabel><Check defaultChecked />开启封边优化</CheckLabel></OptionRow>
            <OptionRow $indent={33} $h={26}>
              <CheckLabel><Check defaultChecked />凹面宽度小于等于时不封</CheckLabel>
              <WidthInput defaultValue="20" aria-label="凹面宽度" />
            </OptionRow>
            <Rule>优化规则:在4边上的线段同对应的上下左右封边，切角、<br />圆弧、凹陷处等异形边封边同上一个在4边上的封边。</Rule>
          </GroupBody>
        </Group>
        <Group>
          <GroupTitle>预铣</GroupTitle>
          <GroupBody>
            <OptionRow><CheckLabel><Check defaultChecked />开启四边预铣优化</CheckLabel></OptionRow>
            {["切角邻边不预铣", "凹面邻边不预铣", "圆弧邻边不预铣", "斜线邻边不预铣"].map((t) => (
              <OptionRow key={t} $indent={20} $h={23}><CheckLabel><Check defaultChecked />{t}</CheckLabel></OptionRow>
            ))}
            <Rule>优化规则:条件1:默认在4边上的线段加预铣，条件2:在条<br />件1的预铣线段上去除满足勾选条件的预铣边。</Rule>
          </GroupBody>
        </Group>
      </OptionsBody>
      <Actions>
        <ActionButton>确定<Mark $x={-28} $y={-19} $w={105} $h={51} /></ActionButton>
        <ActionButton>取消</ActionButton>
      </Actions>
    </OptionsWindow>
  );
}

/* ---------- page ---------- */

export default function App() {
  return (
    <Shell>
      <GlobalStyle />
      <Header>
        <TitleRow>
          <AppTitle>易木定制化家具数字化生产管理系统</AppTitle>
          <WindowButtons>
            <WindowButton aria-label="菜单"><MenuIcon /></WindowButton>
            <WindowButton aria-label="最小化"><MinIcon /></WindowButton>
            <WindowButton aria-label="最大化"><MaxIcon /></WindowButton>
            <WindowButton aria-label="关闭"><CloseIcon /></WindowButton>
          </WindowButtons>
        </TitleRow>
        <ModuleTabs>
          {moduleTabs.map((t) => <ModuleTab key={t} $active={t === "产品管理"}>{t}</ModuleTab>)}
        </ModuleTabs>
      </Header>

      <Workspace>
        <Side>
          <ModuleBadge><BadgeSheet>E</BadgeSheet></ModuleBadge>
          <TreePane>
            <Tree>
              {tree.map(([level, name, folder]) => (
                <TreeRow key={level + name} $level={level}>
                  <TreeToggle>{folder && <ToggleIcon />}</TreeToggle>
                  <TreeLabel href="#" $selected={name === "外形轮廓"}>{folder ? <FolderIcon /> : <DocIcon />}{name}</TreeLabel>
                </TreeRow>
              ))}
            </Tree>
          </TreePane>
        </Side>

        <Main>
          <PageTabs>
            <PageTab>柜类管理<CloseIcon color="#8fa3ab" size={7} /></PageTab>
            <PageTab $active>外形轮廓<CloseIcon color="#a9a9a9" size={7} /></PageTab>
          </PageTabs>
          <Panel>
            <Toolbar>
              <ToolButton icon="add" label="新建" w={58} />
              <ToolButton icon="edit" label="编辑" w={59} />
              <ToolButton icon="copy" label="复制" w={58} />
              <ToolButton icon="trash" label="删除" w={58} />
              <ToolButton icon="load" label="网络导入" w={84} />
              <ToolButton icon="load" label="导入" w={58} />
              <ToolButton icon="check" label="全选/全不选" w={83} />
              <ToolButton icon="export" label="导出" w={59} />
              <ToolButton icon="tools" label="优化封边和预铣" w={100} />
              <ToolButton icon="gear" label="优化设置" w={60}><Mark $x={-2} $y={-8} $w={75} $h={32} /></ToolButton>
            </Toolbar>
            <Split>
              <CategoryPane>
                <CategoryList>
                  {categories.map(([name, n], i) => (
                    <Category key={name} $selected={i === 0}>
                      <CategoryName>{name}</CategoryName>
                      <CategoryCount>({n})</CategoryCount>
                    </Category>
                  ))}
                </CategoryList>
                <HScroll>
                  <svg width="4" height="6" viewBox="0 0 4 6"><path d="M4 0v6L0 3z" fill="#666" /></svg>
                  <HThumb><svg width="8" height="6" viewBox="0 0 8 6"><path d="M1 0v6M4 0v6M7 0v6" stroke="#444" strokeWidth="1.300" /></svg></HThumb>
                  <svg width="4" height="6" viewBox="0 0 4 6"><path d="M0 0v6l4-3z" fill="#666" /></svg>
                </HScroll>
              </CategoryPane>
              <Gallery>
                <GalleryGrid>
                  {Array.from({ length: 28 }, (_, i) => <ShapeCard key={i} row={Math.floor(i / 7)} col={i % 7} />)}
                </GalleryGrid>
              </Gallery>
              <VScroll>
                <svg width="6" height="4" viewBox="0 0 6 4"><path d="M0 4h6L3 0z" fill="#666" /></svg>
                <VThumb><svg width="6" height="8" viewBox="0 0 6 8"><path d="M0 1h6M0 4h6M0 7h6" stroke="#444" strokeWidth="1.300" /></svg></VThumb>
                <svg width="6" height="4" viewBox="0 0 6 4"><path d="M0 0h6L3 4z" fill="#666" /></svg>
              </VScroll>
            </Split>
          </Panel>
        </Main>
      </Workspace>

      <Footer>
        <FooterItem $gap={0} $big>2025-06-25</FooterItem>
        <FooterItem $gap={23}>开发版,1.5.70</FooterItem>
        <FooterItem $gap={0} $push>系统长度单位：mm</FooterItem>
        <FooterItem $gap={12}>
          <svg width="19" height="18" viewBox="0 0 19 18"><path d="M9.500.5l9 8.500-1.500 1.500-7.500-7-7.500 7L.5 9z" fill="#8f9393" /><path d="M3 11l6.500-6L16 11v6.500h-4.500V12h-4v5.500H3z" fill="#8f9393" /></svg>
          山东易木易家软件开发有限公司
        </FooterItem>
        <FooterItem $gap={74} $big>
          <svg width="18" height="15" viewBox="0 0 18 15" fill="#8f9393"><circle cx="12.500" cy="4" r="3" /><path d="M10 8h5q2.500.5 2.500 4.500H12z" /><circle cx="6" cy="5" r="3.600" stroke="#dfe1e1" strokeWidth=".7" /><path d="M.3 14.500Q.3 9.500 4 9l2 1.500L8 9q4 .5 4 5.500z" stroke="#dfe1e1" strokeWidth=".7" /></svg>
          QQ：1533964627
        </FooterItem>
        <FooterItem $gap={17} $big>
          <svg width="16" height="15" viewBox="0 0 16 15" fill="#8f9393"><path d="M5 3.500H3Q0 4 0 7.500t3 4h2zM6.500 3.500h2v8h-2zM8.500 4L14 .5v14L8.500 11zM14 0h1.500v15H14z" /></svg>
          系统消息
        </FooterItem>
        <FooterItem $gap={16} $big>
          <svg width="15" height="15" viewBox="0 0 15 15"><path d="M7.500 0a7 7 0 1 1-1 13.900L3.500 15l.2-2.300A7 7 0 0 1 7.500 0z" fill="#8f9393" /><circle cx="7.500" cy="3.700" r="1.200" fill="#f0f0f0" /><path d="M5.800 6h2.200v4.500M5.800 10.800h3.900" stroke="#f0f0f0" strokeWidth="1.300" fill="none" /></svg>
          产品反馈
        </FooterItem>
      </Footer>

      <ShapeDialog />
      <OptionsDialog />
    </Shell>
  );
}
